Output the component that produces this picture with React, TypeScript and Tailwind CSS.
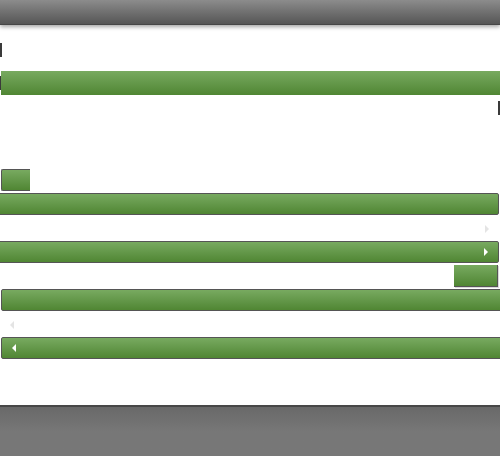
import React from "react";

const green = "bg-gradient-to-b from-[#78aa60] to-[#508633]";

function ArrowRight({ color }: { color: string }) {
  return (
    <svg width="4" height="8" viewBox="0 0 4 8" className="block">
      <polygon points="0,0 4,4 0,8" fill={color} />
    </svg>
  );
}
function ArrowLeft({ color }: { color: string }) {
  return (
    <svg width="4" height="8" viewBox="0 0 4 8" className="block">
      <polygon points="4,0 0,4 4,8" fill={color} />
    </svg>
  );
}

export default function App() {
  return (
    <div className="w-[500px] h-[456px] overflow-hidden bg-white flex flex-col font-['Liberation_Sans',sans-serif]">
      <div className="relative z-10 h-[25px] shrink-0 bg-gradient-to-b from-[#8c8c8c] to-[#565656] border-b border-[#474747] shadow-[0_2px_4px_rgba(0,0,0,0.35)]" />

      <div className="flex flex-col">
        <div className="mt-[18px] w-[2px] h-[14px] bg-[#3a3a3a]" />

        <div className="mt-[14px] flex items-center h-6">
          <div className="w-[1px] h-[14px] bg-[#3a3a3a]" />
          <div className={`flex-1 h-6 ${green}`} />
        </div>

        <div className="mt-[6px] self-end w-[2px] h-[14px] bg-[#3a3a3a]" />

        <div className={`mt-[54px] ml-[1px] w-[29px] h-[22px] border-l border-t border-b border-[#555] rounded-l-[2px] ${green}`} />

        <div className={`mt-[2px] ml-[-1px] w-[500px] h-[22px] border border-[#555] rounded-r-[2px] ${green}`} />

        <div className="mt-[10px] h-[8px] flex justify-end pr-[11px] items-center">
          <ArrowRight color="#e4e4e4" />
        </div>

        <div className={`mt-[8px] ml-[-1px] w-[500px] h-[22px] border border-[#555] rounded-r-[2px] flex items-center justify-end pr-[10px] ${green}`}>
          <ArrowRight color="#ffffff" />
        </div>

        <div className={`mt-[2px] self-end mr-[2px] w-[44px] h-[22px] border-r border-b border-[#555] shadow-[1px_1px_0_rgba(0,0,0,0.15)] ${green}`} />

        <div className={`mt-[2px] ml-[1px] w-[501px] h-[22px] border border-[#555] rounded-l-[2px] ${green}`} />

        <div className="mt-[10px] h-[8px] flex items-center pl-[10px]">
          <ArrowLeft color="#e4e4e4" />
        </div>

        <div className={`mt-[8px] ml-[1px] w-[501px] h-[22px] border border-[#555] rounded-l-[2px] flex items-center pl-[10px] ${green}`}>
          <ArrowLeft color="#ffffff" />
        </div>
      </div>

      <div className="mt-auto h-[51px] shrink-0 border-t-2 border-[#474747] bg-gradient-to-b from-[#696969] via-[#777777] to-[#777777]" />
    </div>
  );
}
